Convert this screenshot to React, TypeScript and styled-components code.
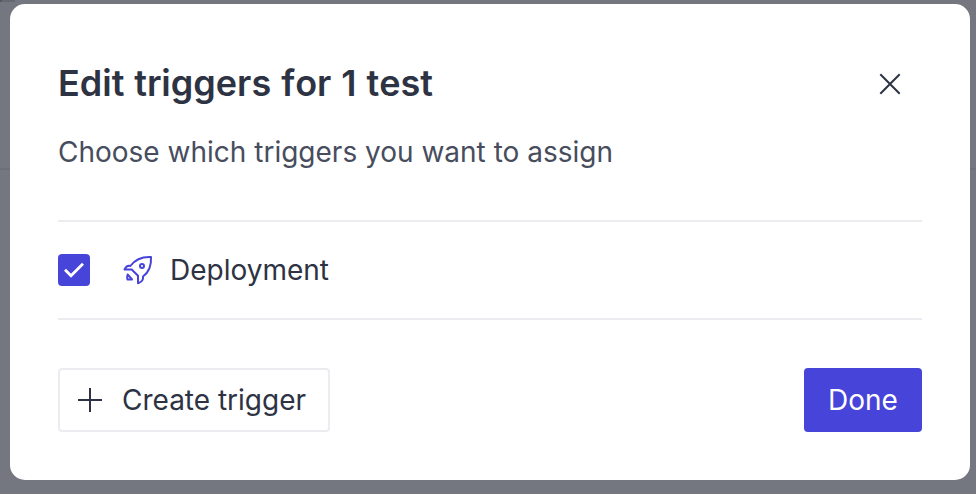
import React from 'react';
import styled, { createGlobalStyle } from 'styled-components';

const GlobalStyle = createGlobalStyle`
  * { box-sizing: border-box; }
  body { margin: 0; overflow: hidden; font-family: Inter, sans-serif; color: #2d3343; -webkit-font-smoothing: antialiased; }
`;

const Overlay = styled.div`
  width: 976px;
  height: 494px;
  padding: 4px 6px 14px 10px;
  background:
    linear-gradient(90deg, #55585f 0 2px, #666971 2px 15px, transparent 15px) 0 0 / 100% 2px no-repeat,
    linear-gradient(#747780 0 168px, #6d7079 168px 170px, #747780 170px);
`;

const Dialog = styled.section`
  height: 476px;
  padding: 56px 48px 48px;
  display: flex;
  flex-direction: column;
  border-radius: 15px;
  background: #fff;
`;

const Header = styled.header`
  height: 48px;
  display: flex;
  align-items: center;
  justify-content: space-between;
`;

const Title = styled.h1`
  margin: 0;
  padding-bottom: 2px;
  font-size: 36px;
  line-height: 46px;
  font-weight: 600;
  font-kerning: none;
  word-spacing: 0.9px;
  white-space: nowrap;
`;

const IconButton = styled.button`
  width: 64px;
  height: 48px;
  padding: 0;
  border: 0;
  display: grid;
  place-items: center;
  background: none;
  color: #2d3343;
`;

const Description = styled.p`
  margin: 24px 0 48px;
  height: 40px;
  font-size: 28px;
  line-height: 40px;
  color: #474d5d;
`;

const TriggerRow = styled.label`
  height: 100px;
  display: flex;
  align-items: center;
  border: solid #ebebf0;
  border-width: 2px 0;
  font-size: 28px;
  line-height: 40px;
`;

const Checkbox = styled.span`
  width: 32px;
  height: 32px;
  border-radius: 4px;
  background: #4744da;
`;

const TriggerIcon = styled.svg`
  margin: 0 16px 0 32px;
`;

const Footer = styled.footer`
  margin-top: 48px;
  display: flex;
  justify-content: space-between;
`;

const Button = styled.button<{ $primary?: boolean }>`
  width: ${p => (p.$primary ? '118px' : '272px')};
  height: 64px;
  padding: 0 0 0 ${p => (p.$primary ? '0' : '14px')};
  display: flex;
  align-items: center;
  justify-content: ${p => (p.$primary ? 'center' : 'flex-start')};
  gap: 16px;
  border: ${p => (p.$primary ? '0' : '2px solid #ebebf0')};
  border-radius: 4px;
  background: ${p => (p.$primary ? '#4744da' : '#fff')};
  color: ${p => (p.$primary ? '#fff' : '#2d3343')};
  font: 400 28px/40px Inter, sans-serif;
`;

export default function App() {
  return (
    <>
      <GlobalStyle />
      <Overlay>
        <Dialog role="dialog" aria-labelledby="title">
          <Header>
            <Title id="title">Edit triggers for 1 test</Title>
            <IconButton aria-label="Close">
              <svg width="32" height="32" fill="none" stroke="currentColor" strokeWidth="2">
                <path d="M6.3 6.3 25.7 25.7M25.7 6.3 6.3 25.7" />
              </svg>
            </IconButton>
          </Header>
          <Description>Choose which triggers you want to assign</Description>
          <TriggerRow>
            <Checkbox role="checkbox" aria-checked="true">
              <svg width="32" height="32" fill="none" stroke="#fff" strokeWidth="2.8">
                <path d="m7 15.8 6 6L25 9.8" />
              </svg>
            </Checkbox>
            <TriggerIcon width="32" height="32" fill="none" stroke="#4744da" strokeWidth="2" strokeLinejoin="round">
              <path d="M8.3 12C13.2 5.4 19.5 2.5 29 3C29.5 11.8 27.2 18 21 22.5C21.5 26 20 28 16 29.2V21.8L9.7 15.5H2.5C4.2 12 5.6 11.2 8.3 12Z" />
              <circle cx="20" cy="12" r="2" />
              <path d="M5.6 20.5 10 25.4H5.4C5 23.7 5.1 22 5.6 20.5Z" />
            </TriggerIcon>
            Deployment
          </TriggerRow>
          <Footer>
            <Button>
              <svg width="32" height="32" fill="none" stroke="currentColor" strokeWidth="2">
                <path d="M16 4v24M4 16h24" />
              </svg>
              Create trigger
            </Button>
            <Button $primary>Done</Button>
          </Footer>
        </Dialog>
      </Overlay>
    </>
  );
}
